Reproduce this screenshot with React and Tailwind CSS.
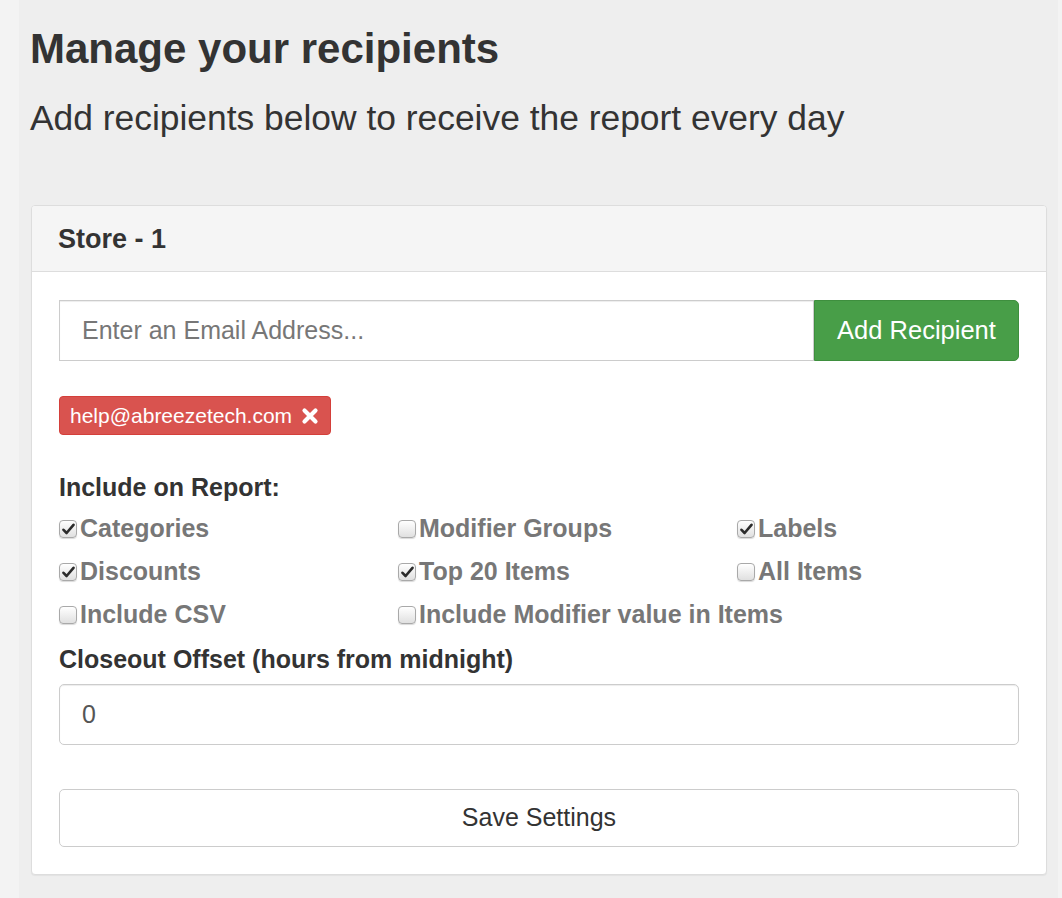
import React from "react";

const font = { fontFamily: '"Liberation Sans", Arial, Helvetica, sans-serif' };

function Check({ checked }) {
  return (
    <span className="relative inline-flex h-[18px] w-[18px] shrink-0 items-center justify-center rounded-[4px] border border-[#a9a9a9] bg-gradient-to-b from-[#ffffff] to-[#e0e0e0] shadow-[0_1px_1px_rgba(0,0,0,0.15)]">
      {checked && (
        <svg width="13" height="12" viewBox="0 0 13 12" className="block">
          <path d="M1.5 6.8 L4.6 10 L11.5 1.8" fill="none" stroke="#2b2b2b" strokeWidth="2.6" strokeLinecap="round" strokeLinejoin="round" />
        </svg>
      )}
    </span>
  );
}

function Opt({ checked, label }) {
  return (
    <label className="flex h-[43px] items-center gap-[3px] whitespace-nowrap text-[25px] font-bold leading-[43px] text-[#777]">
      <Check checked={checked} />
      <span>{label}</span>
    </label>
  );
}

export default function App() {
  return (
    <div className="min-h-[898px] w-full bg-[#f3f3f3]" style={font}>
      <div className="ml-[19px] min-h-[898px] w-[1039px] bg-[#eeeeee] pl-[11px] pr-[11px] pt-[26px]">
        <h1 className="text-[42px] font-bold leading-[46px] text-[#333]">Manage your recipients</h1>
        <p className="mt-[26px] text-[35.4px] font-light leading-[40px] text-[#333]">
          Add recipients below to receive the report every day
        </p>

        <div className="ml-[1px] mt-[67px] w-[1016px] overflow-hidden rounded-[4px] border border-[#dddddd] bg-white shadow-[0_1px_1px_rgba(0,0,0,0.05)]">
          <div className="flex h-[66px] items-center border-b border-[#dddddd] bg-[#f5f5f5] px-[26px]">
            <span className="text-[27px] font-bold leading-[30px] text-[#333]">Store - 1</span>
          </div>

          <div className="px-[27px] pb-[27px] pt-[28px]">
            <div className="flex h-[61px] w-[960px]">
              <input
                type="text"
                placeholder="Enter an Email Address..."
                className="h-[61px] flex-1 border border-[#cccccc] bg-white px-[22px] text-[25px] text-[#555] shadow-[inset_0_1px_1px_rgba(0,0,0,0.075)] outline-none placeholder:text-[#777]"
                style={font}
              />
              <button
                className="h-[61px] w-[205px] rounded-r-[5px] border border-[#3e8f3e] bg-[#489e48] text-[25.5px] text-white"
                style={font}
              >
                Add Recipient
              </button>
            </div>

            <div className="mt-[35px] flex">
              <span className="inline-flex h-[39px] items-center gap-[9px] rounded-[4px] border border-[#d43f3a] bg-[#d9534f] pl-[10px] pr-[11px] text-[21px] leading-[37px] text-white">
                help@abreezetech.com
                <svg width="18" height="18" viewBox="0 0 18 18">
                  <path d="M3.5 3.5 L14.5 14.5 M14.5 3.5 L3.5 14.5" stroke="#fff" strokeWidth="4.2" strokeLinecap="round" />
                </svg>
              </span>
            </div>

            <div className="mt-[37px] text-[25px] font-bold leading-[30px] text-[#333]">Include on Report:</div>

            <div className="mt-[5px] grid grid-cols-[339px_339px_1fr]">
              <Opt checked label="Categories" />
              <Opt checked={false} label="Modifier Groups" />
              <Opt checked label="Labels" />
              <Opt checked label="Discounts" />
              <Opt checked label="Top 20 Items" />
              <Opt checked={false} label="All Items" />
              <Opt checked={false} label="Include CSV" />
              <Opt checked={false} label="Include Modifier value in Items" />
            </div>

            <div className="mt-[8px] text-[25px] font-bold leading-[30px] text-[#333]">
              Closeout Offset (hours from midnight)
            </div>

            <input
              type="text"
              defaultValue="0"
              className="mt-[10px] block h-[61px] w-[960px] rounded-[5px] border border-[#cccccc] bg-white px-[22px] text-[25px] text-[#555] shadow-[inset_0_1px_1px_rgba(0,0,0,0.075)] outline-none"
              style={font}
            />

            <button
              className="mt-[44px] block h-[58px] w-[960px] rounded-[5px] border border-[#cccccc] bg-white text-[25px] text-[#333]"
              style={font}
            >
              Save Settings
            </button>
          </div>
        </div>
      </div>
    </div>
  );
}
